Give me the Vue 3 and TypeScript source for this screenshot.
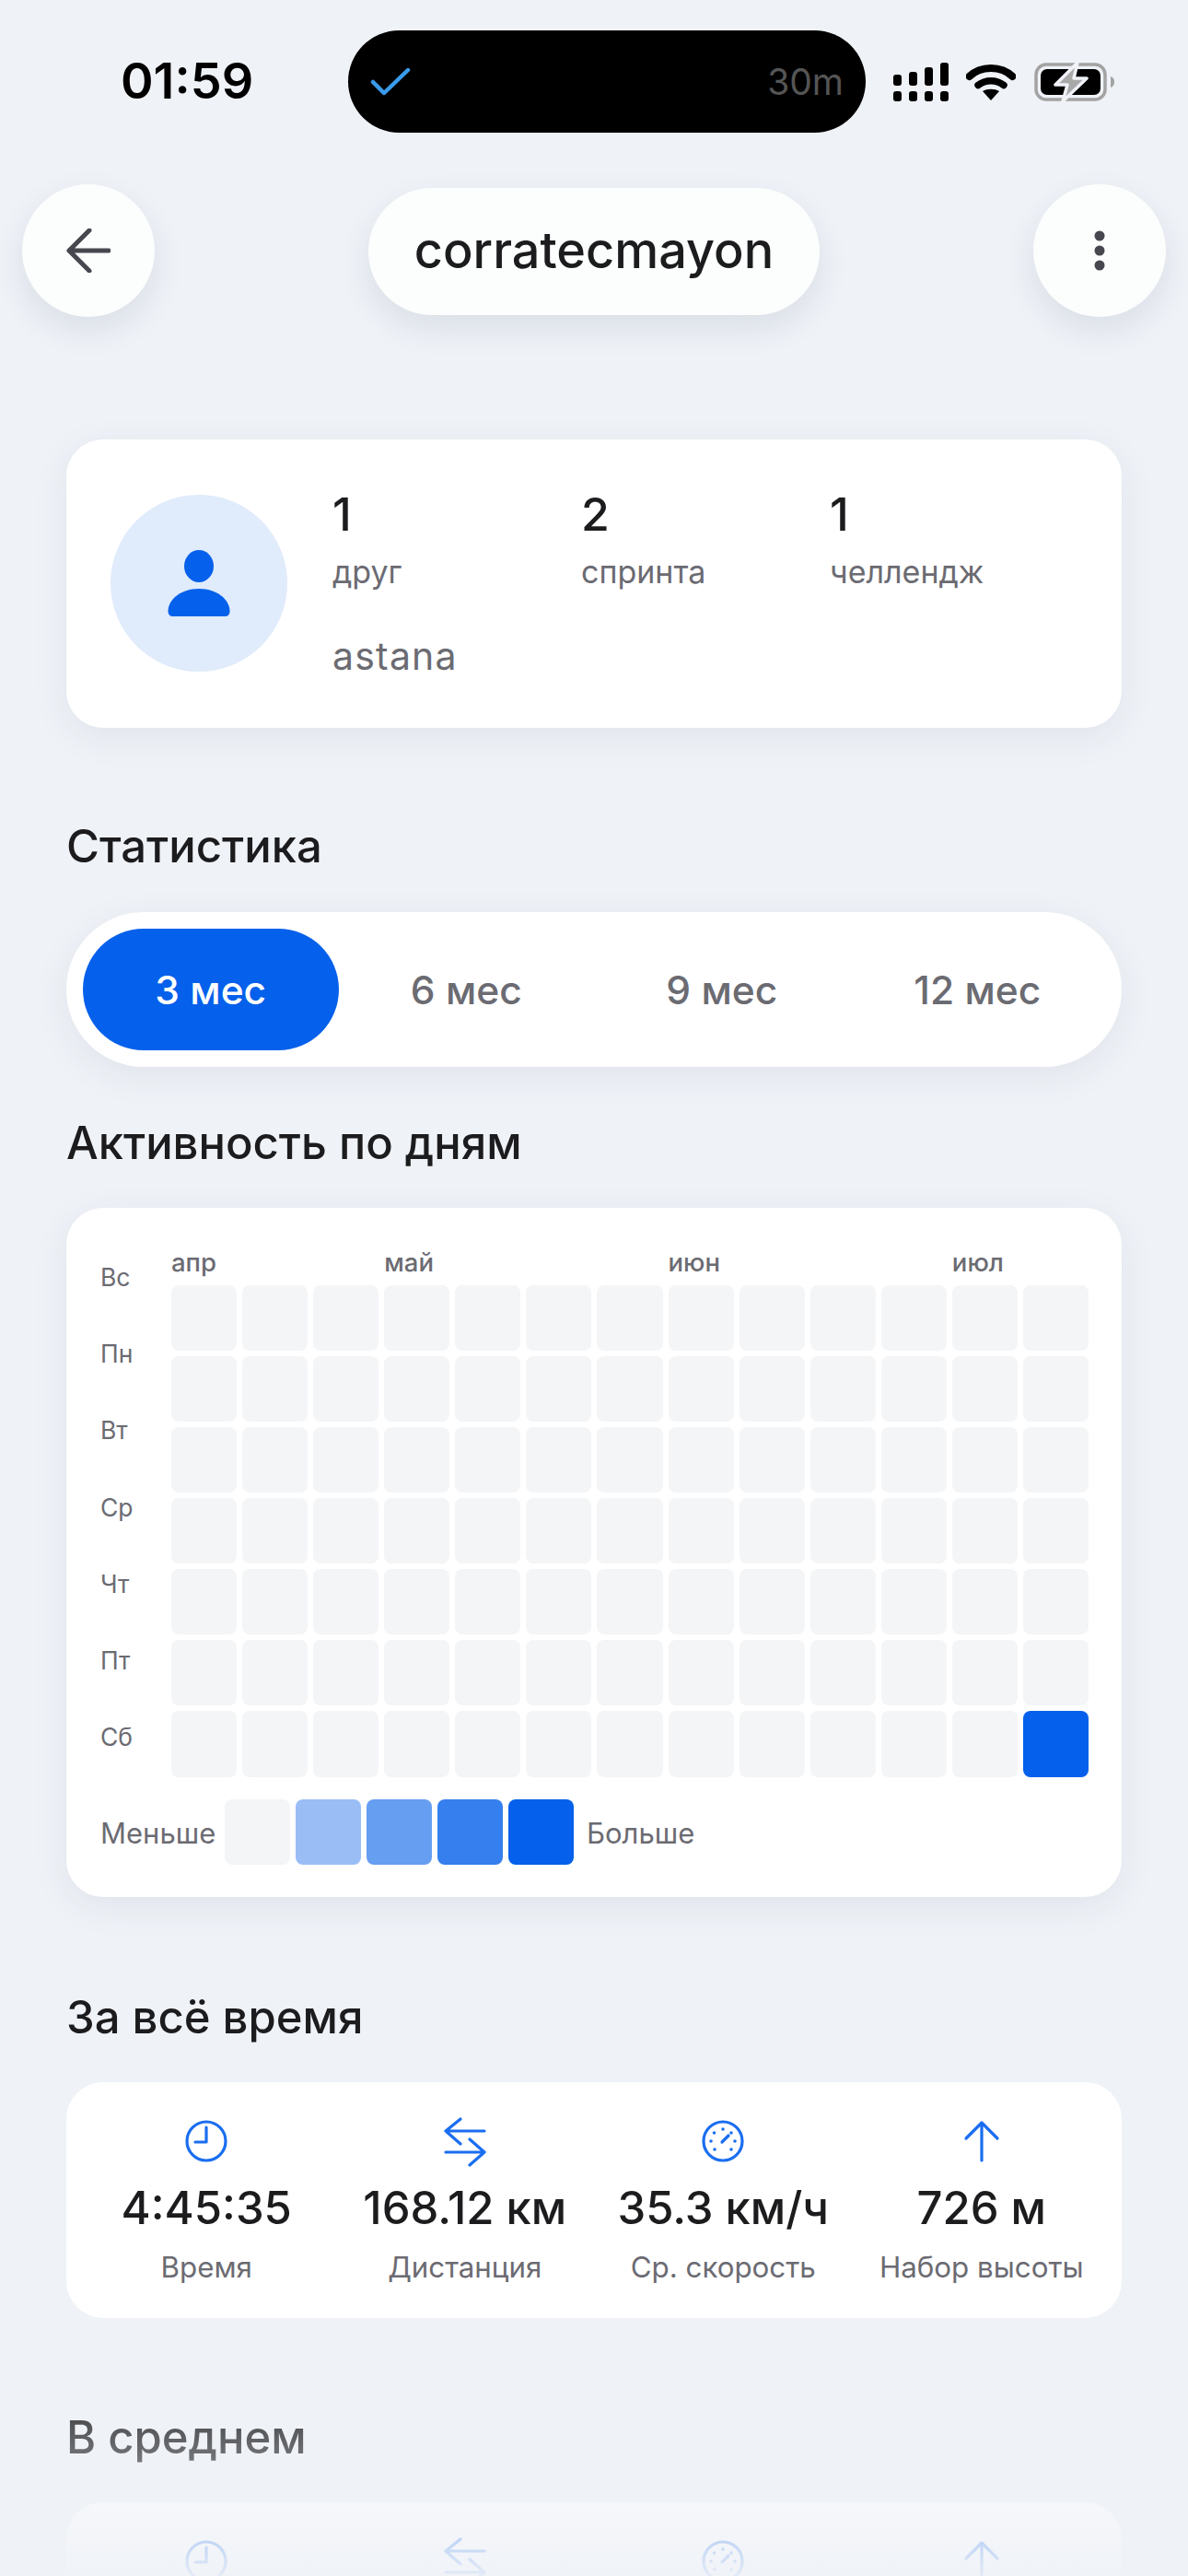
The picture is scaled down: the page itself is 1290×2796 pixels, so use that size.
<script setup lang="ts">
const stats = [
  { value: '1', label: 'друг' },
  { value: '2', label: 'спринта' },
  { value: '1', label: 'челлендж' },
]
const periods = ['3 мес', '6 мес', '9 мес', '12 мес']
const days = ['Вс', 'Пн', 'Вт', 'Ср', 'Чт', 'Пт', 'Сб']
const months = [
  { name: 'апр', span: 3 },
  { name: 'май', span: 4 },
  { name: 'июн', span: 4 },
  { name: 'июл', span: 2 },
]
const cellCount = 91
const legend = ['l0', 'l1', 'l2', 'l3', 'l4']
type Metric = { icon: 'clock' | 'swap' | 'gauge' | 'up'; value?: string; label?: string }
const totals: Metric[] = [
  { icon: 'clock', value: '4:45:35', label: 'Время' },
  { icon: 'swap', value: '168.12 км', label: 'Дистанция' },
  { icon: 'gauge', value: '35.3 км/ч', label: 'Ср. скорость' },
  { icon: 'up', value: '726 м', label: 'Набор высоты' },
]
const averages: Metric[] = [{ icon: 'clock' }, { icon: 'swap' }, { icon: 'gauge' }, { icon: 'up' }]
const gaugeDots = [
  [0, -13], [-9.5, -9], [9, -9], [-13, 0], [13, 0], [-9, 9], [9, 9],
]
</script>

<template>
  <div class="page">
    <div class="status">
      <span class="time">01:59</span>
      <div class="island">
        <svg class="check" width="44" height="30" viewBox="0 0 44 30" fill="none">
          <path d="M3 15 L15 27 L41 2" stroke="#3a9bec" stroke-width="4.5" stroke-linecap="round" stroke-linejoin="round" />
        </svg>
        <span class="timer">30m</span>
      </div>
      <div class="sys">
        <svg width="62" height="42" viewBox="0 0 62 42" fill="#000">
          <rect x="0" y="13" width="9" height="12" rx="3" />
          <rect x="17" y="10" width="9" height="15" rx="3" />
          <rect x="34" y="5" width="9" height="20" rx="3" />
          <rect x="51" y="0" width="9" height="25" rx="3" />
          <rect x="0" y="31" width="9" height="11" rx="3" />
          <rect x="17" y="31" width="9" height="11" rx="3" />
          <rect x="34" y="31" width="9" height="11" rx="3" />
          <rect x="51" y="31" width="9" height="11" rx="3" />
        </svg>
        <svg width="54" height="42" viewBox="0 0 54 42" fill="none">
          <path d="M3.5 15 C16 3 38 3 50.5 15" stroke="#000" stroke-width="8" stroke-linecap="round" />
          <path d="M13 24.5 C21 18 33 18 41 24.5" stroke="#000" stroke-width="7.5" stroke-linecap="round" />
          <path d="M27 41 L18 31 C23 28 31 28 36 31 Z" fill="#000" />
        </svg>
        <svg class="battery" width="88" height="42" viewBox="0 0 88 42" fill="none">
          <rect x="2" y="2" width="75" height="38" rx="11" stroke="#a3a3a3" stroke-width="3.5" />
          <rect x="7" y="7" width="65" height="28" rx="7" fill="#000" />
          <path d="M83 15 C86 16 87 18 87 21 C87 24 86 26 83 27 Z" fill="#a3a3a3" />
          <path d="M47 0 L23 24 H36 L31 42 L57 17 H43 Z" fill="#a9a9a9" stroke="#eff2f7" stroke-width="3.5" stroke-linejoin="round" />
        </svg>
      </div>
    </div>

    <header class="topbar">
      <button class="round">
        <svg width="48" height="48" viewBox="0 0 48 48" fill="none">
          <path d="M25 2 L3 24 L25 46 M3 24 H46" stroke="#47474f" stroke-width="5" stroke-linecap="round" stroke-linejoin="round" />
        </svg>
      </button>
      <div class="title">corratecmayon</div>
      <button class="round">
        <svg width="12" height="44" viewBox="0 0 12 44" fill="#47474f">
          <circle cx="6" cy="6" r="5.5" />
          <circle cx="6" cy="22" r="5.5" />
          <circle cx="6" cy="38" r="5.5" />
        </svg>
      </button>
    </header>

    <section class="card profile">
      <div class="avatar">
        <svg width="68" height="72" viewBox="0 0 68 72" fill="#0560eb">
          <ellipse cx="34" cy="17.5" rx="16" ry="17.5" />
          <path d="M0.5 66 C1 53 15 42 34 42 C53 42 67 53 67.5 66 C67.5 70 65.5 72 62 72 H6 C2.5 72 0.5 70 0.5 66 Z" />
        </svg>
      </div>
      <div class="info">
        <div class="stat-row">
          <div v-for="s in stats" :key="s.label" class="stat">
            <div class="stat-value">{{ s.value }}</div>
            <div class="stat-label">{{ s.label }}</div>
          </div>
        </div>
        <div class="city">astana</div>
      </div>
    </section>

    <h2 class="heading h-stats">Статистика</h2>
    <div class="tabs">
      <div v-for="(p, i) in periods" :key="p" class="tab" :class="{ active: i === 0 }">{{ p }}</div>
    </div>

    <h2 class="heading h-activity">Активность по дням</h2>
    <section class="card activity">
      <div class="heat">
        <div class="days">
          <span v-for="d in days" :key="d">{{ d }}</span>
        </div>
        <div class="heat-main">
          <div class="months">
            <span v-for="m in months" :key="m.name" :style="{ gridColumn: `span ${m.span}` }">{{ m.name }}</span>
          </div>
          <div class="cells">
            <i v-for="n in cellCount" :key="n" class="cell" :class="{ l4: n === cellCount }"></i>
          </div>
        </div>
      </div>
      <div class="legend">
        <span class="legend-less">Меньше</span>
        <i v-for="l in legend" :key="l" class="cell" :class="l"></i>
        <span class="legend-more">Больше</span>
      </div>
    </section>

    <h2 class="heading h-total">За всё время</h2>
    <section class="card metrics">
      <div v-for="m in totals" :key="m.icon" class="metric">
        <svg class="mi" width="48" height="48" viewBox="0 0 48 48" fill="none">
          <template v-if="m.icon === 'clock'">
            <circle cx="24" cy="24" r="21" />
            <path d="M24 9 V25 H12" />
          </template>
          <template v-else-if="m.icon === 'swap'">
            <path d="M45 13 H3 M19 0 L3 13 L19 27" />
            <path d="M3 36 H45 M29 22 L45 36 L29 50" />
          </template>
          <template v-else-if="m.icon === 'gauge'">
            <circle cx="24" cy="24" r="21" />
            <circle v-for="(d, i) in gaugeDots" :key="i" class="dot" :cx="24 + d[0]" :cy="24 + d[1]" r="1.8" />
            <path d="M23 25 L30 18" />
          </template>
          <template v-else>
            <path d="M24 45 V4 M7 21 L24 4 L41 21" />
          </template>
        </svg>
        <div class="m-value">{{ m.value }}</div>
        <div class="m-label">{{ m.label }}</div>
      </div>
    </section>

    <h2 class="heading h-avg">В среднем</h2>
    <section class="card metrics">
      <div v-for="m in averages" :key="m.icon" class="metric">
        <svg class="mi" width="48" height="48" viewBox="0 0 48 48" fill="none">
          <template v-if="m.icon === 'clock'">
            <circle cx="24" cy="24" r="21" />
            <path d="M24 9 V25 H12" />
          </template>
          <template v-else-if="m.icon === 'swap'">
            <path d="M45 13 H3 M19 0 L3 13 L19 27" />
            <path d="M3 36 H45 M29 22 L45 36 L29 50" />
          </template>
          <template v-else-if="m.icon === 'gauge'">
            <circle cx="24" cy="24" r="21" />
            <circle v-for="(d, i) in gaugeDots" :key="i" class="dot" :cx="24 + d[0]" :cy="24 + d[1]" r="1.8" />
            <path d="M23 25 L30 18" />
          </template>
          <template v-else>
            <path d="M24 45 V4 M7 21 L24 4 L41 21" />
          </template>
        </svg>
      </div>
    </section>

    <div class="fade"></div>
  </div>
</template>

<style>
html,
body {
  margin: 0;
  background: #eff2f7;
}
</style>

<style scoped>
.page {
  position: relative;
  height: 2796px;
  overflow: hidden;
  background: #eff2f7;
  font-family: Inter, "Liberation Sans", sans-serif;
  color: #1c1c1e;
  display: flex;
  flex-direction: column;
}
.status {
  display: flex;
  align-items: center;
  height: 111px;
  margin-top: 33px;
  flex: none;
}
.time {
  margin-left: 131px;
  width: 247px;
  font-size: 54px;
  font-weight: 600;
  color: #000;
  line-height: 60px;
  margin-top: -1px;
}
.island {
  width: 562px;
  height: 111px;
  background: #000;
  border-radius: 56px;
  display: flex;
  align-items: center;
  justify-content: space-between;
  padding: 0 24px 0 24px;
  box-sizing: border-box;
}
.timer {
  font-size: 39px;
  color: #555;
  line-height: 44px;
}
.sys {
  display: flex;
  align-items: center;
  margin-left: 30px;
  gap: 17px;
}
.battery {
  margin-left: 3px;
}
.topbar {
  flex: none;
  margin-top: 56px;
  padding: 0 24px;
  display: flex;
  align-items: center;
  justify-content: space-between;
}
.round {
  width: 144px;
  height: 144px;
  border: 0;
  padding: 0;
  border-radius: 50%;
  background: #fcfdfd;
  box-shadow: 0 14px 34px rgba(40, 55, 85, 0.1);
  display: flex;
  align-items: center;
  justify-content: center;
}
.title {
  width: 490px;
  height: 138px;
  margin-top: 2px;
  padding-bottom: 3px;
  box-sizing: border-box;
  border-radius: 69px;
  background: #fcfdfd;
  box-shadow: 0 14px 34px rgba(40, 55, 85, 0.1);
  font-size: 54px;
  font-weight: 500;
  display: flex;
  align-items: center;
  justify-content: center;
}
.card {
  flex: none;
  margin: 0 72px;
  background: #fff;
  border-radius: 40px;
}
.profile {
  margin-top: 133px;
  height: 313px;
  padding-left: 48px;
  display: flex;
  align-items: center;
  gap: 49px;
  box-sizing: border-box;
  box-shadow: 0 10px 40px rgba(40, 55, 85, 0.07);
}
.avatar {
  width: 192px;
  height: 192px;
  margin-top: -2px;
  border-radius: 50%;
  background: #e0ebfb;
  display: flex;
  align-items: center;
  justify-content: center;
}
.info {
  margin-top: -2px;
}
.stat-row {
  display: grid;
  grid-template-columns: repeat(3, 270px);
}
.stat-value {
  font-size: 50px;
  font-weight: 500;
  line-height: 58px;
}
.stat-label {
  font-size: 34px;
  color: #6b6b72;
  line-height: 40px;
  margin-top: 14px;
}
.city {
  font-size: 41px;
  color: #6b6b72;
  line-height: 48px;
  margin-top: 47px;
  letter-spacing: 1.2px;
}
.heading {
  flex: none;
  margin: 0 0 0 72px;
  font-size: 49px;
  font-weight: 500;
  line-height: 60px;
}
.h-stats {
  margin-top: 99px;
}
.tabs {
  flex: none;
  margin: 41px 72px 0;
  height: 168px;
  padding: 18px;
  box-sizing: border-box;
  border-radius: 84px;
  background: #fff;
  display: grid;
  grid-template-columns: repeat(4, 1fr);
  box-shadow: 0 10px 40px rgba(40, 55, 85, 0.07);
}
.tab {
  display: flex;
  align-items: center;
  justify-content: center;
  border-radius: 66px;
  font-size: 42.5px;
  font-weight: 500;
  color: #6b6b72;
}
.tab.active {
  background: #0560eb;
  color: #fff;
}
.h-activity {
  margin-top: 53px;
}
.activity {
  margin-top: 40px;
  height: 748px;
  padding: 44px 36px 0 37px;
  box-sizing: border-box;
  box-shadow: 0 10px 40px rgba(40, 55, 85, 0.07);
}
.heat {
  display: flex;
}
.days {
  width: 77px;
  margin-top: 16px;
  display: grid;
  grid-auto-rows: 30px;
  row-gap: 53.2px;
  align-content: start;
  font-size: 26.5px;
  line-height: 30px;
  color: #6b6b72;
}
.heat-main {
  flex: 1;
}
.months {
  display: grid;
  grid-template-columns: repeat(13, 1fr);
  column-gap: 6px;
  height: 30px;
  margin-bottom: 10px;
  font-size: 27.5px;
  font-weight: 500;
  line-height: 30px;
  color: #6b6b72;
}
.cells {
  display: grid;
  grid-template-columns: repeat(13, 1fr);
  grid-auto-rows: 71.08px;
  gap: 6px;
}
.cell {
  display: block;
  border-radius: 8px;
  background: #f4f5f7;
}
.legend .cell {
  width: 71px;
  height: 71px;
}
.cell.l1 {
  background: #9abdf6;
}
.cell.l2 {
  background: #669ef1;
}
.cell.l3 {
  background: #357fee;
}
.cell.l4 {
  background: #0560eb;
}
.legend {
  display: flex;
  align-items: center;
  gap: 6px;
  margin-top: 24px;
  font-size: 31px;
  color: #6b6b72;
}
.legend-less {
  width: 129px;
  margin-top: 2px;
}
.legend-more {
  margin-left: 8px;
  margin-top: 2px;
}
.h-total {
  margin-top: 101px;
}
.metrics {
  margin-top: 40px;
  height: 256px;
  padding: 40px 12px 0;
  box-sizing: border-box;
  display: grid;
  grid-template-columns: repeat(4, 1fr);
}
.metric {
  display: flex;
  flex-direction: column;
  align-items: center;
}
.mi {
  flex: none;
  overflow: visible;
  stroke: #1a6ef0;
  stroke-width: 3.2;
  stroke-linecap: round;
  stroke-linejoin: round;
}
.dot {
  fill: #1a6ef0;
  stroke: none;
}
.m-value {
  font-size: 49px;
  font-weight: 500;
  line-height: 58px;
  margin-top: 20px;
  white-space: nowrap;
}
.m-label {
  font-size: 31.3px;
  line-height: 36px;
  color: #6b6b72;
  margin-top: 17px;
  white-space: nowrap;
}
.h-avg {
  margin-top: 100px;
}
.fade {
  position: absolute;
  left: 0;
  right: 0;
  top: 2570px;
  bottom: 0;
  background: linear-gradient(rgba(239, 242, 247, 0), rgba(239, 242, 247, 0.94));
  pointer-events: none;
}
</style>
